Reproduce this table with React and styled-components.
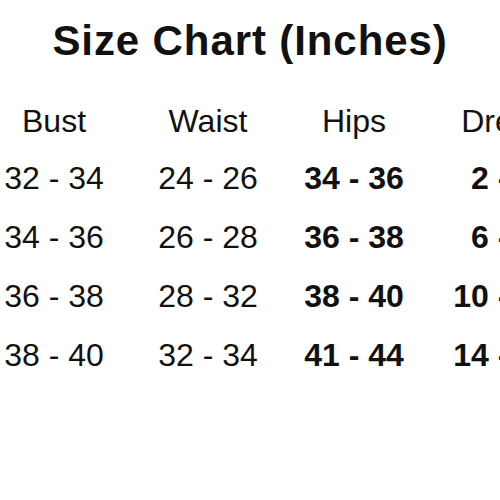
import React from 'react';
import styled, { createGlobalStyle } from 'styled-components';

const GlobalStyle = createGlobalStyle`
  html, body {
    margin: 0;
    padding: 0;
    background: #fff;
    overflow: hidden;
  }
  body {
    font-family: 'Liberation Sans', Arial, sans-serif;
    color: #111;
  }
`;

const Page = styled.main`
  width: 500px;
  height: 500px;
  overflow: hidden;
  padding-top: 20px;
  box-sizing: border-box;
`;

const Title = styled.h1`
  margin: 0;
  font-size: 42px;
  line-height: 42px;
  font-weight: 700;
  letter-spacing: 0.9px;
  text-align: center;
  white-space: nowrap;
`;

const Table = styled.div`
  margin-top: 43px;
  margin-left: -22px;
  display: flex;
  flex-direction: column;
  gap: 27px;
`;

const Row = styled.div`
  display: grid;
  grid-template-columns: 152px 156px 136px 162px;
  font-size: 32px;
  line-height: 32px;
  white-space: nowrap;
  margin-bottom: ${(p) => (p.$head ? '-2px' : '0')};
`;

const Cell = styled.div`
  text-align: center;
  font-weight: ${(p) => (p.$bold ? 700 : 400)};
`;

const headers = ['Bust', 'Waist', 'Hips', 'Dress'];

const sizes = [
  ['32 - 34', '24 - 26', '34 - 36', '2 - 4'],
  ['34 - 36', '26 - 28', '36 - 38', '6 - 8'],
  ['36 - 38', '28 - 32', '38 - 40', '10 - 12'],
  ['38 - 40', '32 - 34', '41 - 44', '14 - 16'],
];

export default function App() {
  return (
    <>
      <GlobalStyle />
      <Page>
        <Title>Size Chart (Inches)</Title>
        <Table>
          <Row $head>
            {headers.map((h) => (
              <Cell key={h}>{h}</Cell>
            ))}
          </Row>
          {sizes.map((row, i) => (
            <Row key={i}>
              {row.map((v, j) => (
                <Cell key={j} $bold={j >= 2}>
                  {v}
                </Cell>
              ))}
            </Row>
          ))}
        </Table>
      </Page>
    </>
  );
}
